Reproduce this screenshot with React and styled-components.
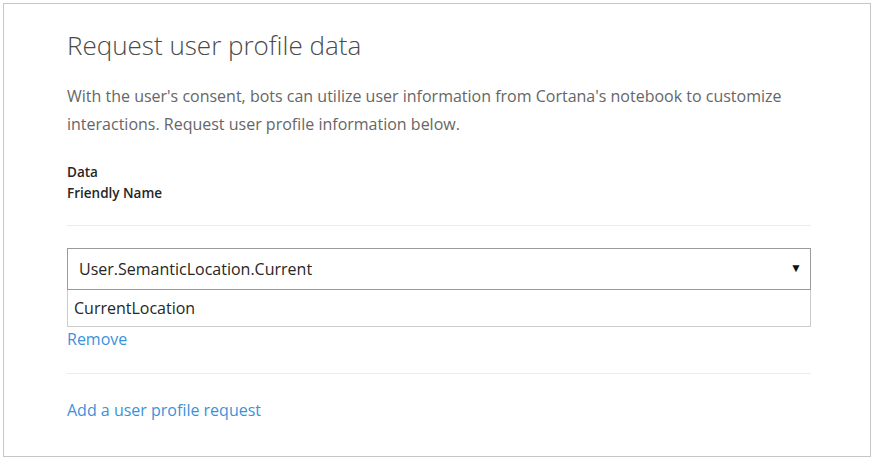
import React, { useState } from "react";
import styled, { createGlobalStyle } from "styled-components";

const GlobalStyle = createGlobalStyle`
  body {
    margin: 0;
    background: #ffffff;
    font-family: "Open Sans", "Noto Sans", "Liberation Sans", sans-serif;
  }
`;

const App = () => {
  const [field, setField] = useState("User.SemanticLocation.Current");
  const [name, setName] = useState("CurrentLocation");

  return (
    <>
      <GlobalStyle />
      <Frame>
        <Title>Request user profile data</Title>
        <Intro>
          With the user's consent, bots can utilize user information from
          Cortana's notebook to customize interactions. Request user profile
          information below.
        </Intro>
        <Labels>
          <Label>Data</Label>
          <Label>Friendly Name</Label>
        </Labels>
        <Divider />
        <Request>
          <Select value={field} onChange={(e) => setField(e.target.value)}>
            <option>User.SemanticLocation.Current</option>
            <option>User.SemanticLocation.Home</option>
            <option>User.SemanticLocation.Work</option>
          </Select>
          <Arrow>▼</Arrow>
          <NameInput value={name} onChange={(e) => setName(e.target.value)} />
        </Request>
        <LinkButton>Remove</LinkButton>
        <Divider $gap={22} />
        <LinkButton $top={24}>Add a user profile request</LinkButton>
      </Frame>
    </>
  );
};

export default App;

const Frame = styled.div`
  box-sizing: border-box;
  margin: 3px;
  width: 868px;
  height: 454px;
  border: 1px solid #c6c6c6;
  padding: 25px 59px 0 63px;
`;

const Title = styled.h1`
  margin: 0;
  font-size: 26px;
  font-weight: 300;
  line-height: 32px;
  color: #4a4a4a;
`;

const Intro = styled.p`
  margin: 21px 0 0;
  font-size: 16px;
  line-height: 28px;
  color: #666666;
`;

const Labels = styled.div`
  display: flex;
  flex-direction: column;
  margin-top: 24px;
`;

const Label = styled.span`
  font-size: 13.5px;
  font-weight: 600;
  line-height: 21px;
  color: #262626;
`;

const Divider = styled.hr`
  margin: ${(p) => p.$gap || 21}px 0 0;
  border: none;
  border-top: 1px solid #ececec;
  height: 0;
`;

const Request = styled.div`
  position: relative;
  display: flex;
  flex-direction: column;
  margin-top: 22px;
`;

const Select = styled.select`
  appearance: none;
  box-sizing: border-box;
  height: 42px;
  padding: 0 30px 0 11px;
  border: 1px solid #9a9a9a;
  border-radius: 0;
  background: #ffffff;
  font-family: inherit;
  font-size: 16px;
  color: #262626;
  outline: none;
`;

const Arrow = styled.span`
  position: absolute;
  top: 13px;
  right: 9px;
  font-size: 12px;
  line-height: 14px;
  color: #111111;
  pointer-events: none;
`;

const NameInput = styled.input`
  box-sizing: border-box;
  height: 37px;
  padding: 0 6px;
  border: 1px solid #cccccc;
  border-top: none;
  font-family: inherit;
  font-size: 16px;
  color: #262626;
  outline: none;
`;

const LinkButton = styled.button`
  display: block;
  margin-top: ${(p) => p.$top || 0}px;
  padding: 0;
  border: none;
  background: none;
  font-family: inherit;
  font-size: 16px;
  line-height: 24px;
  color: #3a92dc;
  cursor: pointer;
`;
